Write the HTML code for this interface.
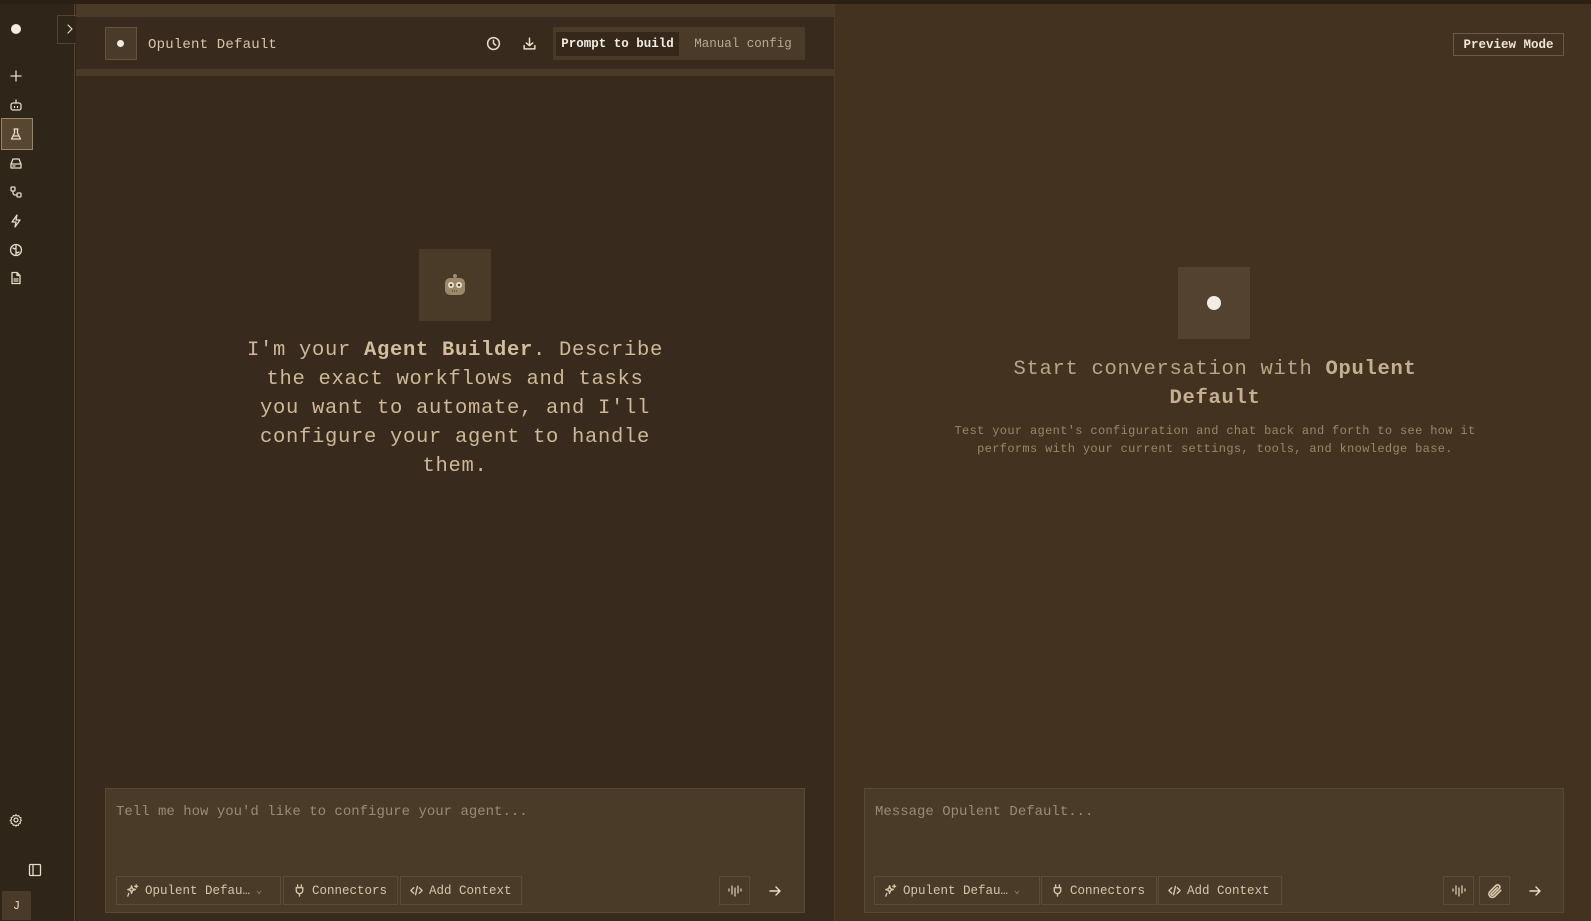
<!DOCTYPE html>
<html><head><meta charset="utf-8"><style>
*{box-sizing:border-box;margin:0;padding:0}
body{width:1591px;height:921px;overflow:hidden;background:#2e2418;font-family:"Liberation Mono",monospace;color:#d8c4a8;position:relative}
.a{position:absolute}
svg{display:block}
.ic{position:absolute;width:14px;height:14px;stroke:#e8dcc8;fill:none;stroke-width:1.6;stroke-linecap:round;stroke-linejoin:round}
.btn{position:absolute;top:876px;height:29px;border:1px solid #5d4b36;display:flex;align-items:center;font-size:12.5px;color:#d8c4a8;padding:0 9px;gap:6px}
.btn svg{width:13px;height:13px;stroke:#d8c4a8;fill:none;stroke-width:1.5;stroke-linecap:round;stroke-linejoin:round}
</style></head><body>
<div class="a" style="left:0;top:0;width:75px;height:921px;background:#2f2519;border-right:1px solid #56432e"></div>
<div class="a" style="left:0;top:0;width:1591px;height:4px;background:#2a2016"></div>
<div class="a" style="left:11px;top:24px;width:10px;height:10px;border-radius:50%;background:#f2ece4"></div>
<div class="a" style="left:57px;top:15px;width:19px;height:29px;border:1px solid #56432e;border-right:none;background:#2f2519"></div>
<svg class="ic" style="left:65px;top:23px;width:10px;height:12px;stroke-width:1.2" viewBox="0 0 10 12"><path d="M3 2l4 4-4 4"/></svg>
<svg class="ic" style="left:9px;top:69px;stroke-width:1.3" viewBox="0 0 14 14"><path d="M7 2v10M2 7h10"/></svg>
<svg class="ic" style="left:9px;top:98px;stroke-width:1.3" viewBox="0 0 14 14"><rect x="2" y="5" width="10" height="7" rx="2"/><path d="M7 2v3M5.5 8.5v1M8.5 8.5v1"/></svg>
<div class="a" style="left:1px;top:118px;width:32px;height:32px;background:#574630;border:1px solid #9a8563"></div>
<svg class="ic" style="left:9px;top:127px;stroke-width:1.3" viewBox="0 0 14 14"><path d="M5 2h4M5.5 2v4L2.5 12h9L8.5 6V2M4 9h6"/></svg>
<svg class="ic" style="left:9px;top:156px;stroke-width:1.3" viewBox="0 0 14 14"><path d="M2 8l2-5h6l2 5v4H2z M2 8h10M4 10h2"/></svg>
<svg class="ic" style="left:9px;top:185px;stroke-width:1.3" viewBox="0 0 14 14"><rect x="2" y="2" width="4" height="4" rx="1"/><rect x="8" y="8" width="4" height="4" rx="1"/><path d="M4 6v2a2 2 0 0 0 2 2h2"/></svg>
<svg class="ic" style="left:9px;top:214px;stroke-width:1.3" viewBox="0 0 14 14"><path d="M8 1L3 8h4l-1 5 5-7H7z"/></svg>
<svg class="ic" style="left:9px;top:243px;stroke-width:1.3" viewBox="0 0 14 14"><circle cx="7" cy="7" r="5.5"/><path d="M7 2v10M4 5c1 1 2 1 3 0M7 9c1 1 2 1 3 0"/></svg>
<svg class="ic" style="left:9px;top:271px;stroke-width:1.3" viewBox="0 0 14 14"><path d="M3 1.5h5l3 3V12.5H3z M8 1.5v3h3M5 8h4M5 10h4"/></svg>
<svg class="ic" style="left:9px;top:813px;stroke-width:1.2" viewBox="0 0 14 14"><circle cx="7" cy="7" r="2"/><path d="M7 1.5l1.2 1.5 1.9-.4.6 1.8 1.8.6-.4 1.9L13 8l-1.5 1.2.4 1.9-1.8.6-.6 1.8-1.9-.4L7 14.5 5.8 13l-1.9.4-.6-1.8-1.8-.6.4-1.9L0.5 8l1.5-1.2-.4-1.9 1.8-.6.6-1.8 1.9.4z" transform="scale(.9) translate(.8 .3)"/></svg>
<svg class="ic" style="left:28px;top:863px;stroke-width:1.3" viewBox="0 0 14 14"><rect x="1.5" y="1.5" width="11" height="11" rx="1"/><path d="M5 1.5v11"/></svg>
<div class="a" style="left:2px;top:891px;width:29px;height:29px;background:#4a3a29;font-size:12px;color:#e8dcc8;display:flex;align-items:center;justify-content:center">J</div>
<div class="a" style="left:76px;top:4px;width:758px;height:917px;background:#382a1c"></div>
<div class="a" style="left:76px;top:4px;width:758px;height:13px;background:#4a3a28"></div>
<div class="a" style="left:76px;top:69px;width:758px;height:7px;background:#4a3a28"></div>
<div class="a" style="left:834px;top:4px;width:1px;height:917px;background:#4a3a28"></div>
<div class="a" style="left:105px;top:27px;width:32px;height:33px;background:#4a3a29;border:1px solid #66533b"></div>
<div class="a" style="left:117px;top:40px;width:7px;height:7px;border-radius:50%;background:#f2ece4"></div>
<div class="a" style="left:148px;top:37px;font-size:14px;letter-spacing:.2px;color:#d8c4a8">Opulent Default</div>
<svg class="ic" style="left:486px;top:36px;width:15px;height:15px;stroke-width:1.4" viewBox="0 0 14 14"><circle cx="7" cy="7" r="5.5"/><path d="M7 4v3l2 1.5"/></svg>
<svg class="ic" style="left:522px;top:36px;width:15px;height:15px;stroke-width:1.4" viewBox="0 0 14 14"><path d="M7 2v7M4 6.5L7 9l3-2.5M2 9v3h10V9"/></svg>
<div class="a" style="left:553px;top:27px;width:252px;height:33px;background:#4a3a28"></div>
<div class="a" style="left:556px;top:32px;width:123px;height:24px;background:#35281b;color:#f2ece4;font-size:12.5px;font-weight:bold;display:flex;align-items:center;justify-content:center">Prompt to build</div>
<div class="a" style="left:684px;top:32px;width:118px;height:24px;color:#bba98f;font-size:12.5px;display:flex;align-items:center;justify-content:center">Manual config</div>
<div class="a" style="left:419px;top:249px;width:72px;height:72px;background:#4a3a28;display:flex;align-items:center;justify-content:center">
<svg width="30" height="30" viewBox="0 0 30 30"><circle cx="15" cy="6" r="2" fill="#a08a6c"/><rect x="5" y="8" width="20" height="17" rx="5" fill="#9c8768"/><circle cx="11" cy="15" r="3" fill="#efe6d6"/><circle cx="19" cy="15" r="3" fill="#efe6d6"/><circle cx="11" cy="15" r="1.3" fill="#5a4530"/><circle cx="19" cy="15" r="1.3" fill="#5a4530"/><path d="M12 21h6" stroke="#5a4530" stroke-width="1.3" stroke-dasharray="1 1"/></svg></div>
<div class="a" style="left:200px;top:336px;width:510px;text-align:center;font-size:20.5px;line-height:29px;letter-spacing:.7px;color:#cdb898">I'm your <b style="color:#d2bd9d">Agent Builder</b>. Describe<br>the exact workflows and tasks<br>you want to automate, and I'll<br>configure your agent to handle<br>them.</div>
<div class="a" style="left:105px;top:788px;width:700px;height:125px;background:#4a3a28;border:1px solid #5a4833"></div>
<div class="a" style="left:116px;top:804px;font-size:14px;color:#9c8a70">Tell me how you'd like to configure your agent...</div>
<div class="btn" style="left:116px;width:165px"><svg viewBox="0 0 14 14"><path d="M6 2l1 3 3 1-3 1-1 3-1-3-3-1 3-1zM11 1v3M9.5 2.5h3M3 10l-1 3"/></svg>Opulent Defau… <span style="font-size:10px;color:#9c8a70">⌄</span></div>
<div class="btn" style="left:283px;width:115px"><svg viewBox="0 0 14 14"><path d="M5 1v3M9 1v3M3.5 4h7v3a3.5 3.5 0 0 1-7 0zM7 10.5V13"/></svg>Connectors</div>
<div class="btn" style="left:400px;width:122px"><svg viewBox="0 0 14 14"><path d="M4 4L1 7l3 3M10 4l3 3-3 3M8 2.5l-2 9"/></svg>Add Context</div>
<div class="btn" style="left:719px;width:31px;justify-content:center;padding:0"><svg viewBox="0 0 16 16" style="width:16px;height:16px;stroke-width:1.3"><path d="M2 8V6M5 11V3M8 13V5M11 10V3M14 8V6"/></svg></div>
<svg class="ic" style="left:768px;top:884px;stroke-width:1.4" viewBox="0 0 14 14"><path d="M2 7h10M8 3l4 4-4 4"/></svg>
<div class="a" style="left:835px;top:4px;width:756px;height:917px;background:#433220"></div>
<div class="a" style="left:1453px;top:33px;width:111px;height:23px;border:1px solid #6b5a42;font-size:12.5px;font-weight:bold;color:#efe6d6;display:flex;align-items:center;justify-content:center">Preview Mode</div>
<div class="a" style="left:1178px;top:267px;width:72px;height:72px;background:#544230"></div>
<div class="a" style="left:1207px;top:296px;width:14px;height:14px;border-radius:50%;background:#f2ece4"></div>
<div class="a" style="left:960px;top:355px;width:510px;text-align:center;font-size:20.5px;line-height:29px;letter-spacing:.7px;color:#b9a487">Start conversation with <b style="color:#c4b091">Opulent<br>Default</b></div>
<div class="a" style="left:925px;top:422px;width:580px;text-align:center;font-size:12px;line-height:18px;letter-spacing:.35px;color:#998669">Test your agent's configuration and chat back and forth to see how it<br>performs with your current settings, tools, and knowledge base.</div>
<div class="a" style="left:864px;top:788px;width:700px;height:125px;background:#4a3a28;border:1px solid #5a4833"></div>
<div class="a" style="left:875px;top:804px;font-size:14px;color:#9c8a70">Message Opulent Default...</div>
<div class="btn" style="left:874px;width:166px"><svg viewBox="0 0 14 14"><path d="M6 2l1 3 3 1-3 1-1 3-1-3-3-1 3-1zM11 1v3M9.5 2.5h3M3 10l-1 3"/></svg>Opulent Defau… <span style="font-size:10px;color:#9c8a70">⌄</span></div>
<div class="btn" style="left:1041px;width:116px"><svg viewBox="0 0 14 14"><path d="M5 1v3M9 1v3M3.5 4h7v3a3.5 3.5 0 0 1-7 0zM7 10.5V13"/></svg>Connectors</div>
<div class="btn" style="left:1158px;width:124px"><svg viewBox="0 0 14 14"><path d="M4 4L1 7l3 3M10 4l3 3-3 3M8 2.5l-2 9"/></svg>Add Context</div>
<div class="btn" style="left:1443px;width:31px;justify-content:center;padding:0"><svg viewBox="0 0 16 16" style="width:16px;height:16px;stroke-width:1.3"><path d="M2 8V6M5 11V3M8 13V5M11 10V3M14 8V6"/></svg></div>
<div class="btn" style="left:1479px;width:31px;justify-content:center;padding:0"><svg viewBox="0 0 14 14" style="width:16px;height:16px"><path d="M12 6.5l-5.5 5.5a3 3 0 0 1-4.2-4.2L8 2a2 2 0 0 1 2.8 2.8L5.2 10.5a1 1 0 0 1-1.4-1.4L9 4"/></svg></div>
<svg class="ic" style="left:1528px;top:884px;stroke-width:1.4" viewBox="0 0 14 14"><path d="M2 7h10M8 3l4 4-4 4"/></svg>
</body></html>
